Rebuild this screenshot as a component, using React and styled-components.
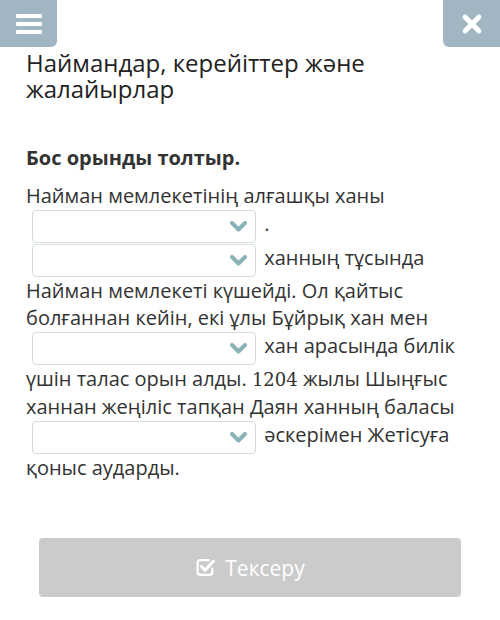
import React from 'react';
import styled, { createGlobalStyle } from 'styled-components';

const GlobalStyle = createGlobalStyle`
  body {
    margin: 0;
    background: #ffffff;
    font-family: "Open Sans", "Noto Sans", sans-serif;
  }
`;

function Chevron() {
  return (
    <svg width="17" height="11" viewBox="0 0 17 11">
      <polyline points="2,2 8.5,8.5 15,2" fill="none" stroke="#88b3b7" strokeWidth="4" strokeLinecap="round" strokeLinejoin="round" />
    </svg>
  );
}

function Blank() {
  return (
    <Select>
      <Chevron />
    </Select>
  );
}

function CheckSquare() {
  return (
    <svg width="21" height="21" viewBox="0 0 20 20">
      <path d="M13 3H5a2.5 2.5 0 0 0-2.5 2.5v9A2.5 2.5 0 0 0 5 17h9a2.5 2.5 0 0 0 2.5-2.5V11" fill="none" stroke="#fff" strokeWidth="2.2" strokeLinecap="round" />
      <polyline points="6,9 9.5,12.5 17.5,4" fill="none" stroke="#fff" strokeWidth="2.8" strokeLinecap="round" strokeLinejoin="round" />
    </svg>
  );
}

function App() {
  return (
    <Page>
      <GlobalStyle />
      <TopBar>
        <CornerButton side="left">
          <svg width="28" height="22" viewBox="0 0 28 22">
            <rect x="1" y="1" width="26" height="4" rx="1" fill="#fff" />
            <rect x="1" y="9" width="26" height="4" rx="1" fill="#fff" />
            <rect x="1" y="17" width="26" height="4" rx="1" fill="#fff" />
          </svg>
        </CornerButton>
        <CornerButton side="right">
          <svg width="22" height="22" viewBox="0 0 22 22">
            <path d="M4 4L18 18M18 4L4 18" stroke="#fff" strokeWidth="5" strokeLinecap="round" />
          </svg>
        </CornerButton>
      </TopBar>
      <Content>
        <Title>Наймандар, керейіттер және жалайырлар</Title>
        <Prompt>Бос орынды толтыр.</Prompt>
        <Passage>
          Найман мемлекетінің алғашқы ханы <Blank /> . <Blank /> ханның тұсында
          Найман мемлекеті күшейді. Ол қайтыс болғаннан кейін, екі ұлы Бұйрық хан мен{' '}
          <Blank /> хан арасында билік үшін талас орын алды. <Year>1204</Year> жылы Шыңғыс
          ханнан жеңіліс тапқан Даян ханның баласы <Blank /> әскерімен Жетісуға қоныс
          аударды.
        </Passage>
      </Content>
      <Footer>
        <CheckButton>
          <CheckSquare />
          Тексеру
        </CheckButton>
      </Footer>
    </Page>
  );
}

const Page = styled.div`
  width: 500px;
  height: 620px;
  display: flex;
  flex-direction: column;
  background: #fff;
  color: #333;
`;

const TopBar = styled.div`
  display: flex;
  justify-content: space-between;
  height: 47px;
`;

const CornerButton = styled.div`
  width: 57px;
  height: 47px;
  background: #a2b5c2;
  display: flex;
  align-items: center;
  justify-content: center;
  border-radius: ${(p) => (p.side === 'left' ? '0 0 6px 0' : '0 0 0 6px')};
`;

const Content = styled.div`
  padding: 3px 42px 0 26px;
`;

const Title = styled.h1`
  margin: 0;
  font-size: 24px;
  font-weight: 400;
  line-height: 26px;
  color: #222;
`;

const Prompt = styled.h2`
  margin: 42px 0 0;
  font-size: 20px;
  font-weight: 700;
  line-height: 27px;
  color: #333;
`;

const Passage = styled.p`
  margin: 11px 0 0;
  font-size: 20px;
  line-height: 27px;
  color: #333;
`;

const Year = styled.span`
  font-family: "DejaVu Serif", "Liberation Serif", serif;
  font-size: 18px;
`;

const Select = styled.span`
  display: inline-flex;
  align-items: center;
  justify-content: flex-end;
  box-sizing: border-box;
  width: 224px;
  height: 33px;
  margin: 1px 3px 0 6px;
  padding-right: 8px;
  vertical-align: middle;
  border: 1px solid #d6dddd;
  border-radius: 4px;
  background: #fff;
`;

const Footer = styled.div`
  padding: 57px 39px 0;
`;

const CheckButton = styled.div`
  height: 59px;
  display: flex;
  align-items: center;
  justify-content: center;
  gap: 9px;
  background: #cbcbcb;
  border-radius: 4px;
  color: #fff;
  font-size: 21px;
`;

export default App;
